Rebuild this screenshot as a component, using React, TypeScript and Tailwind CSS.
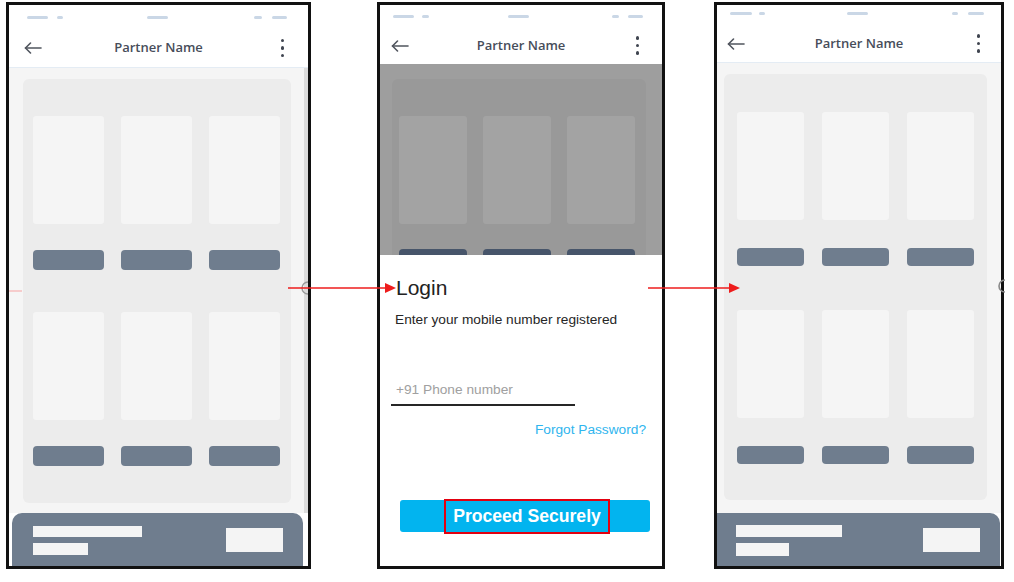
import React from 'react';

const dash = 'h-[3px] rounded-full bg-[#cad7e6]';

const BackArrow = () => (
  <svg width="18" height="12" viewBox="0 0 18 12" fill="none" stroke="#50555e" strokeWidth="1.6" strokeLinecap="round" strokeLinejoin="round">
    <path d="M17 6H1.5" />
    <path d="M6.5 1L1.5 6L6.5 11" />
  </svg>
);

const Kebab = () => (
  <div className="flex flex-col gap-[4px]">
    <span className="h-[3.5px] w-[3.5px] rounded-full bg-[#3f4550]" />
    <span className="h-[3.5px] w-[3.5px] rounded-full bg-[#3f4550]" />
    <span className="h-[3.5px] w-[3.5px] rounded-full bg-[#3f4550]" />
  </div>
);

const Header = ({
  statusCls,
  dashes,
  navCls,
  leftCls,
  rightCls,
}: {
  statusCls: string;
  dashes: string[];
  navCls: string;
  leftCls: string;
  rightCls: string;
}) => (
  <div className="flex flex-col bg-white">
    <div className={`flex items-center ${statusCls}`}>
      {dashes.map((d, i) => (
        <span key={i} className={`${dash} ${d}`} />
      ))}
    </div>
    <div className={`grid grid-cols-[1fr_auto_1fr] items-center ${navCls}`}>
      <div className={leftCls}>
        <BackArrow />
      </div>
      <span className="font-['Open_Sans',sans-serif] text-[13px] font-semibold text-[#474d5a]">Partner Name</span>
      <div className={`justify-self-end ${rightCls}`}>
        <Kebab />
      </div>
    </div>
  </div>
);

// one product cell: picture block and a button under it
const Cell = ({ tile, btn }: { tile: string; btn: string }) => (
  <div>
    <div className={tile} />
    <div className={btn} />
  </div>
);

const cells = [0, 1, 2, 3, 4, 5];

const ScreenOne = () => (
  <div className="ml-[6px] flex h-[567px] w-[305px] flex-col border-[3px] border-[#111]">
    <div className="border-b border-[#e4ecf4]">
      <Header
        statusCls="h-[24px]"
        dashes={['ml-[18px] w-[21px]', 'ml-[9px] w-[6px]', 'ml-[84px] w-[21px]', 'ml-[86px] w-[8px]', 'ml-[10px] w-[15px]']}
        navCls="h-[38px]"
        leftCls="pl-[15px]"
        rightCls="pr-[24px]"
      />
    </div>
    <div className="flex flex-1 bg-[#f5f5f5]">
      <div className="mb-[10px] ml-[14px] mr-[13px] mt-[11px] flex-1 rounded-[6px] bg-[#ececec] pl-[10px] pt-[37px]">
        <div className="grid grid-cols-[71px_71px_71px] gap-x-[17px] gap-y-[42px]">
          {cells.map((c) => (
            <Cell key={c} tile="h-[108px] rounded-[3px] bg-[#f5f5f5]" btn="mt-[26px] h-[20px] rounded-[4px] bg-[#6f7d8e]" />
          ))}
        </div>
      </div>
      <div className="w-[4px] bg-[#dcdcdc]" />
    </div>
    <div className="ml-[3px] mr-[5px] flex h-[53px] items-start justify-between rounded-t-[10px] bg-[#6f7d8e] pl-[21px] pr-[20px]">
      <div className="flex flex-col pt-[13px]">
        <span className="h-[11px] w-[109px] bg-[#f4f4f4]" />
        <span className="mt-[6px] h-[12px] w-[55px] bg-[#f4f4f4]" />
      </div>
      <span className="mt-[15px] h-[24px] w-[57px] bg-[#f4f4f4]" />
    </div>
  </div>
);

const ScreenLogin = () => (
  <div className="ml-[66px] flex h-[567px] w-[288px] flex-col border-[3px] border-[#111]">
    <Header
      statusCls="h-[22px]"
      dashes={['ml-[13px] w-[21px]', 'ml-[8px] w-[7px]', 'ml-[79px] w-[21px]', 'ml-[83px] w-[7px]', 'ml-[9px] w-[15px]']}
      navCls="h-[37px]"
      leftCls="pl-[11px]"
      rightCls="pr-[23px]"
    />
    <div className="h-[191px] overflow-hidden bg-[#9e9e9e]">
      <div className="ml-[12px] mr-[16px] mt-[15px] h-[300px] rounded-[6px] bg-[#999999] pl-[7px] pt-[37px]">
        <div className="grid grid-cols-[68px_68px_68px] gap-x-[16px]">
          {[0, 1, 2].map((c) => (
            <Cell key={c} tile="h-[108px] rounded-[3px] bg-[#a3a3a3]" btn="mt-[25px] h-[20px] rounded-[4px] bg-[#47556a]" />
          ))}
        </div>
      </div>
    </div>
    <div className="flex flex-1 flex-col bg-white font-['Liberation_Sans',Arial,sans-serif]">
      <span className="ml-[16px] mt-[22px] text-[21px] leading-none text-[#222]">Login</span>
      <span className="ml-[15px] mt-[15px] text-[13.7px] leading-none text-[#262626]">Enter your mobile number registered</span>
      <div className="ml-[11px] mt-[56px] w-[184px] border-b-2 border-[#262626] pb-[8px] pl-[5px] text-[13.7px] leading-none text-[#a0a0a0]">
        +91 Phone number
      </div>
      <span className="mr-[16px] mt-[17px] self-end text-[13.7px] leading-none text-[#2fb5ee]">Forgot Password?</span>
      <div className="ml-[20px] mt-[63px] flex h-[32px] w-[250px] items-center justify-center rounded-[3px] bg-[#02b4ef]">
        <span className="ml-[4px] flex h-[35px] items-center border-2 border-[#e3000f] px-[7px] text-[17.6px] font-bold text-white">
          Proceed Securely
        </span>
      </div>
    </div>
  </div>
);

const ScreenThree = () => (
  <div className="ml-[49px] flex h-[567px] w-[290px] flex-col border-[3px] border-[#111]">
    <div className="border-b border-[#e4ecf4]">
      <Header
        statusCls="h-[16px]"
        dashes={['ml-[13px] w-[22px]', 'ml-[7px] w-[6px]', 'ml-[82px] w-[21px]', 'ml-[84px] w-[6px]', 'ml-[10px] w-[16px]']}
        navCls="h-[41px] pt-[4px]"
        leftCls="pl-[10px]"
        rightCls="pr-[21px]"
      />
    </div>
    <div className="flex flex-1 bg-[#f5f5f5]">
      <div className="mb-[13px] ml-[7px] mr-[14px] mt-[11px] flex-1 rounded-[6px] bg-[#ececec] pl-[13px] pt-[38px]">
        <div className="grid grid-cols-[67px_67px_67px] gap-x-[18px] gap-y-[44px]">
          {cells.map((c) => (
            <Cell key={c} tile="h-[108px] rounded-[3px] bg-[#f5f5f5]" btn="mt-[28px] h-[18px] rounded-[4px] bg-[#6f7d8e]" />
          ))}
        </div>
      </div>
    </div>
    <div className="mr-[1px] flex h-[53px] items-start justify-between rounded-tr-[10px] bg-[#6f7d8e] pl-[19px] pr-[20px]">
      <div className="flex flex-col pt-[12px]">
        <span className="h-[12px] w-[106px] bg-[#f4f4f4]" />
        <span className="mt-[6px] h-[13px] w-[53px] bg-[#f4f4f4]" />
      </div>
      <span className="mt-[15px] h-[24px] w-[57px] bg-[#f4f4f4]" />
    </div>
  </div>
);

export default function App() {
  return (
    <div className="relative flex h-[582px] w-[1014px] items-start overflow-hidden bg-white pt-[2px]">
      <ScreenOne />
      <ScreenLogin />
      <ScreenThree />

      {/* side button nubs and flow arrows drawn over the frames */}
      <svg className="absolute left-[300px] top-[281px]" width="10" height="14" fill="none" stroke="#9a9a9a" strokeWidth="1.4">
        <path d="M8 1A6 6 0 0 0 8 13" />
      </svg>
      <svg className="absolute left-[997px] top-[279px]" width="10" height="14" fill="none" stroke="#8a8a8a" strokeWidth="1.6">
        <path d="M8 1A6 6 0 0 0 8 13" />
      </svg>
      <span className="absolute left-[9px] top-[290px] h-[2px] w-[13px] bg-[#f6cccc]" />
      <svg className="absolute left-[288px] top-[282px]" width="108" height="12">
        <line x1="0" y1="6" x2="99" y2="6" stroke="#ee1c1c" strokeWidth="1.6" />
        <polygon points="97,1 108,6 97,11" fill="#ee1c1c" />
      </svg>
      <svg className="absolute left-[648px] top-[282px]" width="92" height="12">
        <line x1="0" y1="6" x2="83" y2="6" stroke="#ee1c1c" strokeWidth="1.6" />
        <polygon points="81,1 92,6 81,11" fill="#ee1c1c" />
      </svg>
    </div>
  );
}
